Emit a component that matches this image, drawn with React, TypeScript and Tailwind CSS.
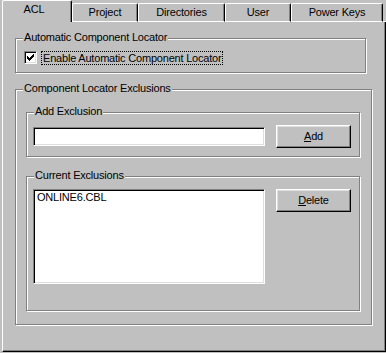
import React from 'react';

const raised =
  'border-t border-l border-r border-b border-t-white border-l-white border-r-black border-b-black shadow-[inset_-1px_-1px_#808080,inset_1px_1px_#dfdfdf]';
const sunken =
  'border-t border-l border-r border-b border-t-[#808080] border-l-[#808080] border-r-white border-b-white shadow-[inset_1px_1px_#000,inset_-1px_-1px_#dfdfdf] bg-white';
const etched = 'border border-[#808080] shadow-[inset_1px_1px_#fff,1px_1px_#fff]';

function GroupLabel({ children }: { children: React.ReactNode }) {
  return (
    <div className="-mt-[8px] ml-[7px] w-fit px-[1px] bg-[#c0c0c0] leading-[13px] whitespace-nowrap">
      {children}
    </div>
  );
}

function Button({ hot, rest }: { hot: string; rest: string }) {
  return (
    <div className={`w-[75px] h-[23px] flex items-center justify-center shrink-0 ${raised}`}>
      <span className="leading-[13px]">
        <span className="underline underline-offset-[1px]">{hot}</span>
        {rest}
      </span>
    </div>
  );
}

function CheckMark() {
  const px: [number, number][] = [
    [6, 0], [5, 1], [6, 1], [0, 2], [4, 2], [5, 2], [6, 2],
    [0, 3], [1, 3], [3, 3], [4, 3], [5, 3],
    [0, 4], [1, 4], [2, 4], [3, 4], [4, 4],
    [1, 5], [2, 5], [3, 5], [2, 6],
  ];
  return (
    <svg width="7" height="7" viewBox="0 0 7 7" shapeRendering="crispEdges">
      {px.map(([x, y]) => (
        <rect key={`${x}-${y}`} x={x} y={y} width="1" height="1" fill="#000" />
      ))}
    </svg>
  );
}

const tabs = [
  { name: 'Project', w: 'w-[66px]' },
  { name: 'Directories', w: 'w-[87px]' },
  { name: 'User', w: 'w-[66px]' },
  { name: 'Power Keys', w: 'w-[92px]' },
];

export default function App() {
  return (
    <div className="w-[386px] h-[353px] bg-[#c0c0c0] flex flex-col text-black text-[11px] tracking-[-0.2px] font-['Liberation_Sans',Arial,sans-serif] overflow-hidden">
      {/* Tab strip */}
      <div className="flex items-end h-[22px] pl-[2px]">
        <div className="w-[70px] h-[22px] border-t border-l border-r border-t-white border-l-white border-r-black rounded-t-[2px] shadow-[inset_-1px_0_#808080] flex justify-center pt-[2px] pr-[6px]">
          <span className="leading-[13px]">ACL</span>
        </div>
        {tabs.map((t) => (
          <div
            key={t.name}
            className={`${t.w} h-[19px] border-t border-l border-r border-b border-t-white border-l-white border-r-black border-b-white rounded-t-[2px] shadow-[inset_-1px_0_#808080] flex justify-center pt-[2px]`}
          >
            <span className="leading-[13px]">{t.name}</span>
          </div>
        ))}
        <div className="flex-1 h-[1px] bg-white" />
      </div>

      {/* Page */}
      <div className="ml-[2px] w-[384px] h-[330px] border-l border-r border-b border-l-white border-r-black border-b-black shadow-[inset_-1px_-1px_#808080] flex flex-col">
        {/* Automatic Component Locator */}
        <div className={`ml-[12px] mt-[16px] w-[351px] h-[35px] ${etched}`}>
          <GroupLabel>Automatic Component Locator</GroupLabel>
          <div className="flex items-start ml-[8px] mt-[7px]">
            <div className={`w-[13px] h-[13px] flex items-center justify-center shrink-0 ${sunken}`}>
              <CheckMark />
            </div>
            <div className="ml-[4px] h-[14px] px-[1px] border border-dotted border-black leading-[12px] whitespace-nowrap">
              Enable Automatic Component Locator
            </div>
          </div>
        </div>

        {/* Component Locator Exclusions */}
        <div className={`ml-[12px] mt-[16px] w-[357px] h-[236px] ${etched}`}>
          <GroupLabel>Component Locator Exclusions</GroupLabel>

          <div className={`ml-[10px] mt-[17px] w-[334px] h-[45px] ${etched}`}>
            <GroupLabel>Add Exclusion</GroupLabel>
            <div className="flex items-center mt-[7px] ml-[6px] h-[23px]">
              <div className={`w-[232px] h-[19px] shrink-0 ${sunken}`} />
              <div className="ml-[11px]">
                <Button hot="A" rest="dd" />
              </div>
            </div>
          </div>

          <div className={`ml-[10px] mt-[19px] w-[334px] h-[135px] ${etched}`}>
            <GroupLabel>Current Exclusions</GroupLabel>
            <div className="flex items-start mt-[7px] ml-[6px]">
              <div className={`w-[232px] h-[95px] shrink-0 pl-[3px] ${sunken}`}>
                <div className="leading-[13px] mt-[1px]">ONLINE6.CBL</div>
              </div>
              <div className="ml-[11px]">
                <Button hot="D" rest="elete" />
              </div>
            </div>
          </div>
        </div>
      </div>
    </div>
  );
}
